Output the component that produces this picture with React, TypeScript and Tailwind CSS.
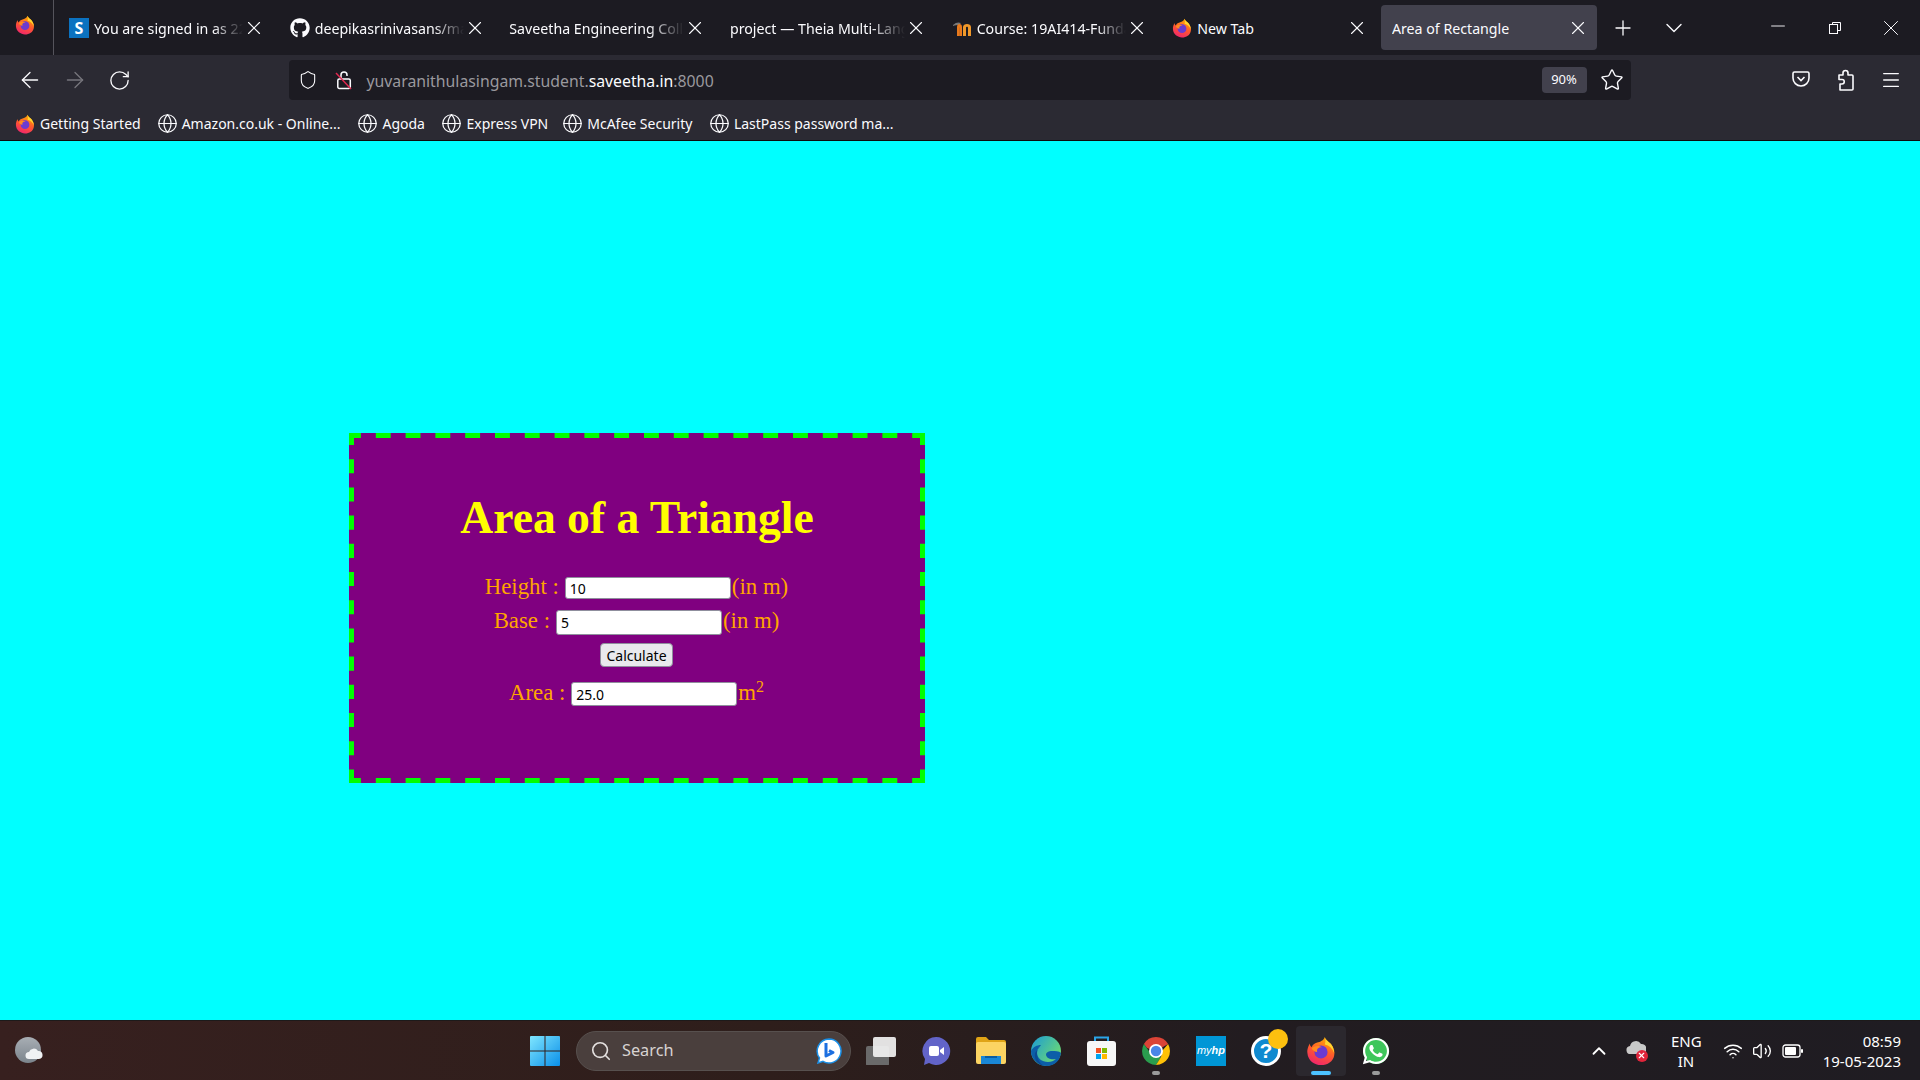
import { useId } from "react"
import type { ReactNode } from "react"
import {
	ArrowLeft,
	ArrowRight,
	ChevronDown,
	ChevronUp,
	Globe,
	Menu,
	Minus,
	Plus,
	RotateCw,
	Search,
	Shield,
	Star,
	Volume2,
	Wifi,
	X,
} from "lucide-react"
import { FaGithub, FaWhatsapp } from "react-icons/fa"

const uiFont = "font-['Noto_Sans',sans-serif]"

const FirefoxLogo = ({ size = 20 }: { size?: number }) => {
	const id = useId()
	return (
		<svg width={size} height={size} viewBox="0 0 32 32">
			<defs>
				<linearGradient id={id + "a"} x1="0.7" y1="0" x2="0.3" y2="1">
					<stop offset="0" stopColor="#ffb000" />
					<stop offset="0.5" stopColor="#ff5a2c" />
					<stop offset="1" stopColor="#f0246e" />
				</linearGradient>
			</defs>
			<path
				d="M20 1c1 4 5 5 7 8 3 4 4 8 3 12-1 6-7 10-14 10S2 26 1.500 18C1 14 3 10 4 8c0 2 1 3 2 4 1-3 3-4 6-5 3-1 7-2 8-6z"
				fill={`url(#${id}a)`}
			/>
			<path d="M20 1c1 4 5 5 7 8 2 3 3 6 3 9-2-5-5-8-10-9 1-3 1-5 0-8z" fill="#ffd52e" />
			<circle cx="16" cy="17" r="7" fill="#6b3bd0" />
			<path d="M6 13c3-3 8-3 11-1-4 0-6 2-5 5-3 0-5-2-6-4z" fill="#ff8a1f" />
		</svg>
	)
}

const MoodleLogo = () => (
	<svg width="20" height="20" viewBox="0 0 20 20">
		<path d="M1 7c3-3 6-3 8-2l-2 2C5 7 3 7 1 8z" fill="#777" />
		<path d="M5 18V9c0-2 1-3 2.500-3S10 7 10 9v9H7.500V9.500H7.400V18z" fill="#e8791c" />
		<path d="M11 18V9c0-2 2-3 4-3s4 1 4 3v9h-3V9.500c0-1-2-1-2 0V18z" fill="#f0982a" />
	</svg>
)

const tabs: { title: string; icon?: ReactNode }[] = [
	{
		title: "You are signed in as 22",
		icon: (
			<span className="flex h-5 w-5 items-center justify-center bg-[#0b72c0] text-[16px] font-bold leading-none text-white">
				S
			</span>
		),
	},
	{
		title: "deepikasrinivasans/main",
		icon: <FaGithub size={20} color="#fbfbfe" />,
	},
	{ title: "Saveetha Engineering College" },
	{ title: "project — Theia Multi-Language" },
	{ title: "Course: 19AI414-Fundamentals", icon: <MoodleLogo /> },
	{ title: "New Tab", icon: <FirefoxLogo /> },
	{ title: "Area of Rectangle" },
]

const bookmarks = [
	{ title: "Amazon.co.uk - Online...", margin: "ml-[16px]" },
	{ title: "Agoda", margin: "ml-[17px]" },
	{ title: "Express VPN", margin: "ml-[16.500px]" },
	{ title: "McAfee Security", margin: "ml-[14px]" },
	{ title: "LastPass password ma...", margin: "ml-[16.500px]" },
]

const TabBar = () => (
	<div className="flex h-[55px] items-center bg-[#1c1b22] text-[#fbfbfe]">
		<div className="flex h-full w-[54px] shrink-0 items-center justify-center border-r border-[#55545c] pb-[6px] pr-[4px]">
			<FirefoxLogo />
		</div>
		<div className="ml-[3px] flex gap-[4.67px]">
			{tabs.map((tab, i) => {
				const active = i === tabs.length - 1
				return (
					<div
						key={tab.title}
						className={`flex h-[45px] w-[216px] shrink-0 items-center rounded-[4px] pr-[8px] ${
							tab.icon ? "pl-[12px]" : "pl-[11px]"
						} ${active ? "bg-[#42414d]" : ""}`}
					>
						{tab.icon && (
							<div className="mr-[5px] flex w-[20px] shrink-0 items-center">
								{tab.icon}
							</div>
						)}
						<span
							className={`min-w-0 flex-1 overflow-hidden whitespace-nowrap pt-[2px] text-[14.200px] ${
								active || tab.title === "New Tab"
									? ""
									: "[mask-image:linear-gradient(to_right,black_80%,transparent_100%)]"
							}`}
						>
							{tab.title}
						</span>
						<X size={22} strokeWidth={1.2} className="shrink-0" />
					</div>
				)
			})}
		</div>
		<div className="flex w-[52px] shrink-0 justify-center">
			<Plus size={24} strokeWidth={1.3} />
		</div>
		<div className="flex w-[50px] shrink-0 justify-center">
			<ChevronDown size={28} strokeWidth={1.2} />
		</div>
		<div className="ml-auto flex pr-px">
			<div className="flex w-[56px] justify-center">
				<Minus size={22} strokeWidth={1} />
			</div>
			<div className="flex w-[57px] items-center justify-center">
				<svg width="14" height="14" viewBox="0 0 14 14" fill="none" stroke="#fbfbfe">
					<rect x="1.500" y="3.500" width="8" height="9" />
					<path d="M4.500 3.500v-2h8v8h-3" />
				</svg>
			</div>
			<div className="flex w-[56px] justify-center">
				<X size={26} strokeWidth={0.9} />
			</div>
		</div>
	</div>
)

const NavBar = () => (
	<div className="flex h-[50px] items-center bg-[#2b2a33] text-[#fbfbfe]">
		<div className="flex w-[60px] justify-center">
			<ArrowLeft size={26} strokeWidth={1.2} />
		</div>
		<div className="-ml-[8px] flex w-[45px] justify-center text-[#77767d]">
			<ArrowRight size={26} strokeWidth={1.2} />
		</div>
		<div className="flex w-[45px] justify-center">
			<RotateCw size={23} strokeWidth={1.4} />
		</div>
		<div className="ml-[146.500px] flex h-[40px] w-[1342px] items-center rounded-[4px] bg-[#1c1b22]">
			<div className="ml-[9px] flex w-[20px] justify-center">
				<Shield size={24} strokeWidth={1.3} />
			</div>
			<div className="ml-[16px] flex w-[20px] justify-center">
				<svg width="20" height="20" viewBox="0 0 20 20" fill="none">
					<path d="M7 9V5a3 3 0 0 1 6 0v1" stroke="#fbfbfe" strokeWidth="1.500" />
					<rect x="3.800" y="9" width="12.500" height="9.500" rx="1.500" stroke="#fbfbfe" strokeWidth="1.500" />
					<path d="M2 3l15 16" stroke="#e22850" strokeWidth="1.500" />
				</svg>
			</div>
			<span className="ml-[13px] pt-[4px] text-[15.800px] text-[#9a999e]">
				yuvaranithulasingam.student.
				<span className="text-[#fbfbfe]">saveetha.in</span>:8000
			</span>
			<div className="ml-auto flex h-[26px] w-[45px] items-center justify-center rounded-[4px] bg-[#42414d] text-[13px]">
				90%
			</div>
			<div className="ml-[15px] mr-[9px] flex w-[20px] justify-center">
				<Star size={24} strokeWidth={1.4} className="shrink-0" />
			</div>
		</div>
		<div className="ml-auto flex pr-[7px]">
			<div className="flex w-[45px] justify-center">
				<svg width="20" height="20" viewBox="0 0 20 20" fill="none" stroke="#fbfbfe" strokeWidth="1.600">
					<path d="M3.500 3h13a1.500 1.500 0 0 1 1.500 1.500V9a8 8 0 0 1-16 0V4.500A1.500 1.500 0 0 1 3.500 3z" />
					<path d="M6.500 8l3.500 3.500L13.500 8" />
				</svg>
			</div>
			<div className="flex w-[45px] justify-center">
				<svg width="20" height="22" viewBox="0 0 20 22" fill="none" stroke="#fbfbfe" strokeWidth="1.600" strokeLinejoin="round">
					<path d="M3 6h4V4a2.500 2.500 0 0 1 5 0v2h4a1 1 0 0 1 1 1v13a1 1 0 0 1-1 1H4v-6h2a2.200 2.200 0 0 0 0-4.500H3z" />
				</svg>
			</div>
			<div className="flex w-[45px] justify-center">
				<Menu size={22} strokeWidth={1.4} />
			</div>
		</div>
	</div>
)

const BookmarksBar = () => (
	<div className="flex h-[36px] items-center border-b border-[#0c0c0d] bg-[#2b2a33] pl-[15px] pt-[2px] text-[14px] text-[#fbfbfe]">
		<FirefoxLogo size={20} />
		<span className="ml-[5px]">Getting Started</span>
		{bookmarks.map(bookmark => (
			<div key={bookmark.title} className={`flex items-center ${bookmark.margin}`}>
				<Globe size={21} strokeWidth={1.4} />
				<span className="ml-[4px] whitespace-nowrap">{bookmark.title}</span>
			</div>
		))}
	</div>
)

const inputClass =
	"h-full w-[166px] rounded-[3px] border border-[#8f8f9d] bg-white px-[4px] font-['Noto_Sans',sans-serif] text-[14px] text-black outline-none"

const Row = ({
	label,
	value,
	suffix,
	className,
}: {
	label: string
	value: string
	suffix: ReactNode
	className: string
}) => (
	<div className={`flex items-center justify-center pr-px ${className}`}>
		<span className="-mt-[2px]">{label}</span>
		<input className={`${inputClass} ml-[6px]`} defaultValue={value} readOnly />
		<span className="-mt-[2px] ml-px">{suffix}</span>
	</div>
)

const TriangleCard = () => (
	<div className="relative ml-[349px] mt-[292px] h-[350px] w-[576px] bg-[#800080] font-['Liberation_Serif',serif]">
		{/* рамка: штрихи длиннее, чем рисует border-dashed */}
		<svg className="absolute inset-0" width="576" height="350" stroke="#00ff00" strokeWidth="5">
			<line x1="0" y1="2.500" x2="576" y2="2.500" strokeDasharray="14.900 14.900" strokeDashoffset="3" />
			<line x1="0" y1="347.500" x2="576" y2="347.500" strokeDasharray="14.900 14.900" strokeDashoffset="3" />
			<line x1="2.500" y1="0" x2="2.500" y2="350" strokeDasharray="14.100 14.100" strokeDashoffset="2" />
			<line x1="573.500" y1="0" x2="573.500" y2="350" strokeDasharray="14.100 14.100" strokeDashoffset="2" />
		</svg>
		<h1 className="pt-[60px] text-center text-[45.600px] font-bold leading-[50px] text-[#ffff00]">
			Area of a Triangle
		</h1>
		<div className="text-[22.800px] text-[#ffa500]">
			<Row label="Height :" value="10" suffix="(in m)" className="mt-[34px] h-[22px]" />
			<Row label="Base :" value="5" suffix="(in m)" className="mt-[11px] h-[25px]" />
			<div className="mt-[8px] flex justify-center pr-px">
				<button className={`h-[24px] w-[73px] rounded-[4px] border border-[#8f8f9d] bg-[#e9e9ed] text-[14px] text-black ${uiFont}`}>
					Calculate
				</button>
			</div>
			<Row
				label="Area :"
				value="25.0"
				suffix={
					<>
						m<sup className="text-[16px]">2</sup>
					</>
				}
				className="mt-[15px] h-[24px]"
			/>
		</div>
	</div>
)

const WindowsLogo = () => (
	<svg width="30" height="30" viewBox="0 0 30 30">
		<defs>
			<linearGradient id="winLogo" x1="0" y1="0" x2="1" y2="1">
				<stop offset="0" stopColor="#7fe6ff" />
				<stop offset="1" stopColor="#0a8fe8" />
			</linearGradient>
		</defs>
		<path d="M0 1a1 1 0 0 1 1-1h13.500v14.500H0zM15.500 0H29a1 1 0 0 1 1 1v13.500H15.500zM0 15.500h14.500V30H1a1 1 0 0 1-1-1zM15.500 15.500H30V29a1 1 0 0 1-1 1H15.500z" fill="url(#winLogo)" />
	</svg>
)

const BingLogo = () => (
	<svg width="26" height="26" viewBox="0 0 26 26">
		<path d="M13 1a12 12 0 1 1-6 22.400L2 25l1.500-5A12 12 0 0 1 13 1z" fill="#fff" stroke="#1a90e8" strokeWidth="1.500" />
		<path d="M10 5v13l7-3.500-4-2" fill="none" stroke="#1c6fe0" strokeWidth="3" strokeLinejoin="round" />
	</svg>
)

const TaskSlot = ({ children, dot }: { children: ReactNode; dot?: boolean }) => (
	<div className="relative flex h-[50px] w-[55px] items-center justify-center">
		{children}
		{dot && (
			<span className="absolute bottom-[1px] left-[23.500px] h-[4px] w-[8px] rounded-full bg-[#9a9a9a]" />
		)}
	</div>
)

const TaskIcons = () => (
	<div className="flex items-center">
		<TaskSlot>
			<svg width="30" height="28" viewBox="0 0 30 28">
				<rect x="0" y="9" width="23" height="20" rx="2" fill="#6a6a6a" />
				<rect x="7" y="0" width="23" height="20" rx="2" fill="#f2f2f2" fillOpacity="0.92" />
			</svg>
		</TaskSlot>
		<TaskSlot>
			<svg width="30" height="30" viewBox="0 0 30 30">
				<path d="M15 1a14 14 0 1 1-7 26l-5 2 1-6A14 14 0 0 1 15 1z" fill="#6264c8" />
				<rect x="8" y="10" width="10" height="10" rx="2" fill="#fff" />
				<path d="M19 14l4-3v8l-4-3z" fill="#fff" />
			</svg>
		</TaskSlot>
		<TaskSlot>
			<svg width="30" height="27" viewBox="0 0 30 27">
				<path d="M0 2a2 2 0 0 1 2-2h8l3 3h15a2 2 0 0 1 2 2v3H0z" fill="#e0a416" />
				<rect x="0" y="5" width="30" height="22" rx="2" fill="#fcd462" />
				<rect x="5" y="19" width="20" height="8" fill="#1a87d6" />
				<rect x="9" y="19" width="12" height="2" fill="#0b5da3" />
			</svg>
		</TaskSlot>
		<TaskSlot>
			<svg width="30" height="30" viewBox="0 0 30 30">
				<defs>
					<linearGradient id="edgeTop" x1="0" y1="0" x2="1" y2="0.700">
						<stop offset="0" stopColor="#1a9ad8" />
						<stop offset="1" stopColor="#6fdc6f" />
					</linearGradient>
				</defs>
				<circle cx="15" cy="15" r="15" fill="url(#edgeTop)" />
				<path d="M30 17c-1 8-7 13-14 13C7 30 0 23 0 15c2-4 6-6 10-6-3 2-4 5-4 8 0 5 5 9 11 9 3 0 6-1 8-3-4 1-9 0-10-4 0-3 3-4 6-4 3 0 7 0 9 2z" fill="#0c5ea8" />
				<path d="M13 30C7 29 3 24 4 17c2-3 4-5 6-8-3 2-4 5-4 8 0 6 3 11 7 13z" fill="#0a4a94" />
			</svg>
		</TaskSlot>
		<TaskSlot>
			<svg width="29" height="30" viewBox="0 0 29 30">
				<path d="M8 6V1.500h13V6" fill="none" stroke="#2aa5e8" strokeWidth="2" />
				<rect x="0" y="5" width="29" height="25" rx="3" fill="#f7f7f7" />
				<rect x="9" y="12" width="5" height="5" fill="#f25022" />
				<rect x="15" y="12" width="5" height="5" fill="#7fba00" />
				<rect x="9" y="18" width="5" height="5" fill="#00a4ef" />
				<rect x="15" y="18" width="5" height="5" fill="#ffb900" />
			</svg>
		</TaskSlot>
		<TaskSlot dot>
			<svg width="30" height="30" viewBox="0 0 30 30">
				<path d="M15 1A14 14 0 0 1 27.100 8L15 15 6 12 2.900 8A14 14 0 0 1 15 1z" fill="#db4437" />
				<path d="M2.900 8A14 14 0 0 0 15 29l5-8-10-3z" fill="#2a9d4e" />
				<path d="M27.100 8A14 14 0 0 1 15 29l5-8 1-6z" fill="#ffc107" />
				<circle cx="15" cy="15" r="7" fill="#fff" />
				<circle cx="15" cy="15" r="5.200" fill="#4a86e8" />
			</svg>
		</TaskSlot>
		<TaskSlot>
			<div className="flex h-[30px] w-[30px] items-center justify-center bg-[#0096d6] font-['Liberation_Sans',sans-serif] text-[11px] italic leading-none text-white">
				my<span className="font-bold">hp</span>
			</div>
		</TaskSlot>
		<TaskSlot>
			<div className="relative flex h-[30px] w-[30px] items-center justify-center rounded-full border-[3px] border-white bg-[#0f8ad0] font-['Liberation_Sans',sans-serif] text-[21px] font-bold text-white">
				?
				<span className="absolute -right-[10px] -top-[10px] h-[20px] w-[20px] rounded-full bg-[#fdc00f]" />
			</div>
		</TaskSlot>
		<div className="relative mx-[2.500px] flex h-[50px] w-[50px] items-center justify-center rounded-[4px] bg-[#2b282e]">
			<FirefoxLogo size={30} />
			<span className="absolute bottom-[1px] left-[15px] h-[4px] w-[20px] rounded-full bg-[#4cc2ff]" />
		</div>
		<TaskSlot dot>
			<div className="relative h-[30px] w-[30px]">
				<div className="absolute inset-[2px] rounded-full bg-[#3ec65a]" />
				<FaWhatsapp size={30} color="#fff" className="absolute inset-0" />
			</div>
		</TaskSlot>
	</div>
)

const Taskbar = () => (
	<div className={`flex h-[60px] items-center border-t border-[#1d1a1a] bg-[linear-gradient(to_right,#37201f,#2e1e1b_40%,#221c20_65%,#1f1c22)] text-white ${uiFont}`}>
		<div className="relative ml-[15px] h-[28px] w-[28px]">
			<div className="h-[26px] w-[26px] rounded-full bg-[linear-gradient(to_bottom,#a8aeb4,#7b848c)]" />
			<svg className="absolute left-[10px] top-[10px]" width="18" height="13" viewBox="0 0 18 13">
				<path d="M4 12a3.500 3.500 0 0 1 0-7 5 5 0 0 1 9-1 4 4 0 0 1 1 8z" fill="#f0f2f4" />
			</svg>
		</div>
		<div className="ml-[487px] flex w-[30px] justify-center">
			<WindowsLogo />
		</div>
		<div className="ml-[16px] flex h-[40px] w-[275px] items-center rounded-full border border-[#57504e] bg-[#4a3f3d] pl-[13px] pr-[8px]">
			<Search size={22} strokeWidth={1.8} className="text-[#e4e0df]" />
			<span className="ml-[10px] flex-1 text-[16.300px] text-[#d8d3d2]">Search</span>
			<BingLogo />
		</div>
		<div className="ml-[2.500px]">
			<TaskIcons />
		</div>
		<div className="ml-[180px] flex w-[30px] justify-center">
			<ChevronUp size={22} strokeWidth={2} />
		</div>
		<div className="relative ml-[12px] h-[22px] w-[21px]">
			<svg width="20" height="14" viewBox="0 0 20 14" className="absolute top-0">
				<path d="M5 14a4 4 0 0 1-1-8 6 6 0 0 1 11-2 5 5 0 0 1 1 10z" fill="#c9c9c9" />
			</svg>
			<div className="absolute -right-[1px] bottom-0 flex h-[12px] w-[12px] items-center justify-center rounded-full bg-[#e0243a]">
				<X size={9} strokeWidth={3} />
			</div>
		</div>
		<div className="ml-[24.500px] w-[30px] whitespace-nowrap text-center text-[15px] leading-[20px]">
			ENG
			<br />
			IN
		</div>
		<div className="ml-[21.500px] flex items-center">
			<Wifi size={20} strokeWidth={1.8} />
			<Volume2 size={20} strokeWidth={1.6} className="ml-[9px]" />
			<svg width="22" height="14" viewBox="0 0 22 14" className="ml-[10px]">
				<rect x="1" y="1" width="17" height="12" rx="2.500" fill="none" stroke="#fff" strokeWidth="1.300" />
				<rect x="3" y="3" width="11" height="8" rx="1" fill="#fff" />
				<rect x="19" y="5" width="2" height="4" rx="1" fill="#fff" />
			</svg>
		</div>
		<div className="ml-auto pr-[19px] text-right text-[15px] leading-[20px]">
			08:59
			<br />
			19-05-2023
		</div>
	</div>
)

const App = () => {
	return (
		<div className={`flex h-[1080px] w-[1920px] flex-col overflow-hidden bg-[#00ffff] ${uiFont}`}>
			<TabBar />
			<NavBar />
			<BookmarksBar />
			<main className="flex-1">
				<TriangleCard />
			</main>
			<Taskbar />
		</div>
	)
}

export default App
